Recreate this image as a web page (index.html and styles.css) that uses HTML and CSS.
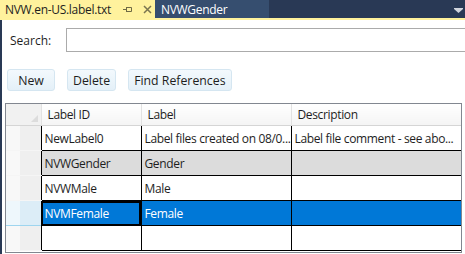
FILE: index.html
```html
<!DOCTYPE html>
<html lang="en">
<head>
  <meta charset="UTF-8">
  <title>NVW.en-US.label.txt</title>
  <link rel="stylesheet" href="styles.css">
</head>
<body>

  <div class="tabbar">
    <div class="tab tab-active">
      <span class="tab-title">NVW.en-US.label.txt</span>
      <svg class="tab-pin" width="9" height="7" viewBox="0 0 9 7">
        <path d="M0 3.5 H3 M3.5 1 V6 M3.5 1.5 H8.5 V5.5 H3.5" fill="none" stroke="#6f6a45" stroke-width="1"/>
      </svg>
      <svg class="tab-close" width="9" height="9" viewBox="0 0 9 9">
        <path d="M1 1 L8 8 M8 1 L1 8" stroke="#7a7550" stroke-width="1.5"/>
      </svg>
    </div>
    <div class="tab">NVWGender</div>
    <div class="tab-spacer"></div>
    <svg class="tab-menu" width="9" height="5" viewBox="0 0 9 5">
      <path d="M0 0 H9 V1 L4.5 5 L0 1 Z" fill="#d0d5dd"/>
    </svg>
  </div>
  <div class="tab-line"></div>

  <div class="panel">
    <div class="search-row">
      <label for="search">Search:</label>
      <input type="text" id="search">
    </div>

    <div class="toolbar">
      <button class="tool-button">New</button>
      <button class="tool-button">Delete</button>
      <button class="tool-button">Find References</button>
    </div>

    <div class="grid">
      <table>
        <colgroup>
          <col class="col-head">
          <col class="col-id">
          <col class="col-label">
          <col class="col-desc">
        </colgroup>
        <thead>
          <tr>
            <th class="corner"><span class="corner-mark"></span></th>
            <th>Label ID</th>
            <th>Label</th>
            <th>Description</th>
          </tr>
        </thead>
        <tbody>
          <tr>
            <td class="row-head"></td>
            <td>NewLabel0</td>
            <td>Label files created on 08/0...</td>
            <td>Label file comment - see abo...</td>
          </tr>
          <tr class="row-grey">
            <td class="row-head"></td>
            <td>NVWGender</td>
            <td>Gender</td>
            <td></td>
          </tr>
          <tr>
            <td class="row-head"></td>
            <td>NVWMale</td>
            <td>Male</td>
            <td></td>
          </tr>
          <tr class="row-selected">
            <td class="row-head"></td>
            <td class="current-cell">NVMFemale</td>
            <td>Female</td>
            <td></td>
          </tr>
          <tr>
            <td class="row-head"></td>
            <td></td>
            <td></td>
            <td></td>
          </tr>
        </tbody>
      </table>
    </div>
  </div>

</body>
</html>
```

FILE: styles.css
```css
body {
  margin: 0;
  font-family: "Open Sans", "Noto Sans", sans-serif;
  font-size: 12px;
  color: #1e1e1e;
  background-color: #ffffff;
  overflow: hidden;
}

.tabbar {
  height: 18px;
  display: flex;
  align-items: stretch;
  background-color: #293955;
  letter-spacing: -0.3px;
}

.tab {
  width: 114px;
  padding-left: 6px;
  box-sizing: border-box;
  display: flex;
  align-items: center;
  background-color: #364e6f;
  color: #ffffff;
}

.tab-active {
  width: 155px;
  padding-left: 5px;
  background-color: #fff29d;
  color: #1e1e1e;
}

.tab-title {
  width: 118px;
}

.tab-pin {
  margin-right: 11px;
}

.tab-spacer {
  flex: 1;
}

.tab-menu {
  align-self: center;
  margin-right: 2px;
  margin-top: 2px;
}

.tab-line {
  height: 2px;
  background-color: #fff29d;
}

.panel {
  height: 234px;
  border-left: 2px solid #293955;
  box-sizing: border-box;
}

.search-row {
  display: flex;
  align-items: center;
  padding-top: 8px;
  padding-left: 8px;
}

.search-row label {
  width: 56px;
}

.search-row input {
  flex: 1;
  height: 24px;
  box-sizing: border-box;
  margin: 0 -4px 0 0;
  border: 1px solid #ababab;
  border-right: none;
  font-family: inherit;
}

.toolbar {
  display: flex;
  gap: 12px;
  padding-top: 17px;
  padding-left: 5px;
}

.tool-button {
  min-width: 48px;
  height: 22px;
  padding: 0 5px;
  font-family: inherit;
  font-size: 12.3px;
  color: #1e1e1e;
  background: linear-gradient(#f3f9fd, #e4f0f8);
  border: 1px solid #d5e6f1;
  border-radius: 3px;
}

.grid {
  margin-top: 12px;
  margin-left: 3px;
  width: 457px;
  height: 150px;
  border: 1px solid #828790;
  box-sizing: border-box;
  overflow: hidden;
}

.grid table {
  border-collapse: collapse;
  table-layout: fixed;
  width: 455px;
  letter-spacing: -0.35px;
}

.col-head { width: 35px; }
.col-id { width: 100px; }
.col-label { width: 150px; }
.col-desc { width: 170px; }

.grid th {
  height: 21px;
  padding: 0 0 0 6px;
  text-align: left;
  font-weight: normal;
  background: linear-gradient(#ffffff, #f4f4f4);
  border-left: 1px solid #e2e2e2;
  border-bottom: 1px solid #d5d5d5;
  white-space: nowrap;
}

.grid th.corner {
  position: relative;
  border-left: none;
  background: #f1f1f1;
}

.corner-mark {
  position: absolute;
  right: 3px;
  bottom: 3px;
  width: 0;
  height: 0;
  border-left: 7px solid transparent;
  border-bottom: 7px solid #dcdcdc;
}

.grid td {
  height: 24px;
  padding: 0 0 0 3px;
  border: 1px solid #000000;
  white-space: nowrap;
  overflow: hidden;
}

.grid td.row-head {
  padding: 0;
  border: none;
  border-bottom: 1px solid #f5f5f5;
  background: linear-gradient(90deg, #f8f8f8 40%, #efefef 40%);
}

.row-grey td {
  background-color: #dcdcdc;
}

.row-selected td {
  background-color: #0078d7;
  color: #ffffff;
}

.row-selected td.row-head {
  border-top: 1px solid #9ed5ef;
  border-bottom: 1px solid #9ed5ef;
  background: linear-gradient(90deg, #eef7fc 40%, #dcedf7 40%);
}

.row-selected td.current-cell {
  outline: 2px solid #000000;
  outline-offset: -2px;
}
```
